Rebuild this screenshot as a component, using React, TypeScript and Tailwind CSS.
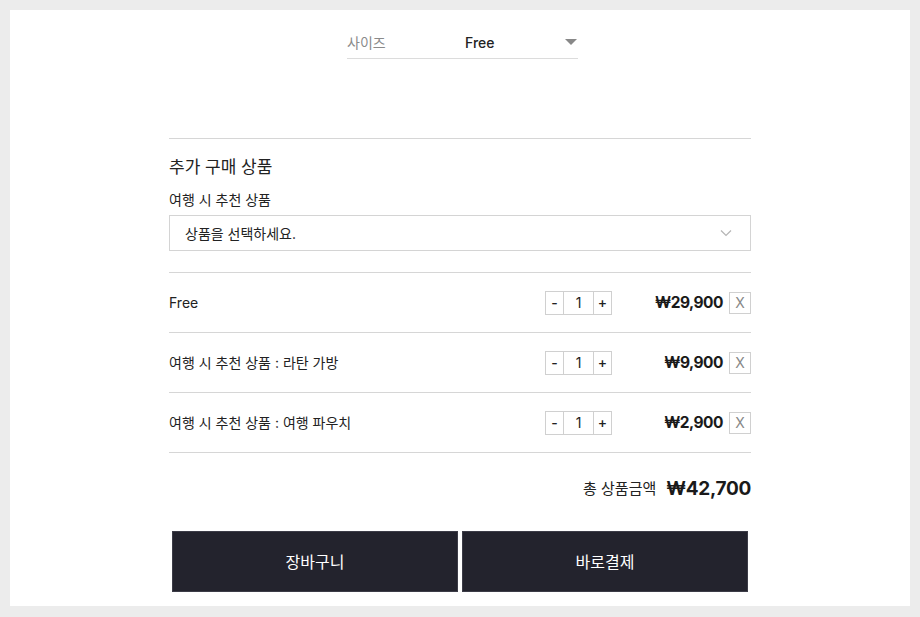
const items = [
  { name: "Free", price: "₩29,900" },
  { name: "여행 시 추천 상품 : 라탄 가방", price: "₩9,900" },
  { name: "여행 시 추천 상품 : 여행 파우치", price: "₩2,900" },
];

const font = { fontFamily: '"Inter", "Noto Sans CJK KR", sans-serif' };

export default function App() {
  return (
    <div className="h-[617px] w-[920px] bg-[#ececec] px-[10px] pt-[10px]" style={font}>
      <div className="h-[596px] w-[900px] bg-white overflow-hidden">
        <div className="mx-auto w-[582px]">
          {/* size option */}
          <div className="ml-[178px] mt-[16px] flex h-[33px] w-[231px] items-center border-b border-[#dcdcdc]">
            <span className="w-[118px] text-[14px] text-[#8a8a8a]">사이즈</span>
            <span className="flex-1 text-[14px] font-medium text-[#222]">Free</span>
            <span className="mr-[1px] h-0 w-0 border-x-[6px] border-t-[6px] border-x-transparent border-t-[#888]" />
          </div>

          <div className="mt-[79px] border-t border-[#d6d6d6] pt-[16px]">
            <h3 className="text-[17px] leading-[24px] text-[#222]">추가 구매 상품</h3>
            <p className="mt-[11px] text-[14px] leading-[20px] text-[#222]">여행 시 추천 상품</p>
            <div className="mt-[5px] flex h-[36px] items-center justify-between border border-[#d4d4d4] pl-[15px] pr-[18px]">
              <span className="text-[14px] text-[#222]">상품을 선택하세요.</span>
              <svg width="12" height="8" viewBox="0 0 12 8" fill="none">
                <path d="M1 1.5l5 5 5-5" stroke="#b5b5b5" strokeWidth="1.2" />
              </svg>
            </div>
          </div>

          <div className="mt-[21px] border-t border-[#d6d6d6]">
            {items.map((it) => (
              <div key={it.name} className="flex h-[60px] items-center border-b border-[#d6d6d6]">
                <span className="flex-1 text-[14px] text-[#222]">{it.name}</span>
                <div className="flex h-[24px] border border-[#d0d0d0] text-[14px] font-medium text-[#222]">
                  <span className="flex w-[17px] items-center justify-center">-</span>
                  <span className="flex w-[31px] items-center justify-center border-x border-[#d0d0d0] font-normal">1</span>
                  <span className="flex w-[17px] items-center justify-center">+</span>
                </div>
                <span className="w-[111px] text-right text-[15.5px] font-bold tracking-[-0.5px] text-[#1a1a1a]">
                  {it.price}
                </span>
                <span className="ml-[6px] flex h-[22px] w-[22px] items-center justify-center border border-[#d0d0d0] text-[14px] text-[#888]">
                  X
                </span>
              </div>
            ))}
          </div>

          <div className="flex h-[72px] items-center justify-end gap-[10px]">
            <span className="text-[15px] text-[#222]">총 상품금액</span>
            <span className="text-[19px] font-bold tracking-[-0.3px] text-[#1a1a1a]">₩42,700</span>
          </div>

          <div className="mt-[6px] flex gap-[4px] px-[3px]">
            <button className="flex h-[61px] flex-1 items-center justify-center border border-[#3c3c47] bg-[#23232d] text-[16px] text-white">
              장바구니
            </button>
            <button className="flex h-[61px] flex-1 items-center justify-center border border-[#3c3c47] bg-[#23232d] text-[16px] text-white">
              바로결제
            </button>
          </div>
        </div>
      </div>
    </div>
  );
}
